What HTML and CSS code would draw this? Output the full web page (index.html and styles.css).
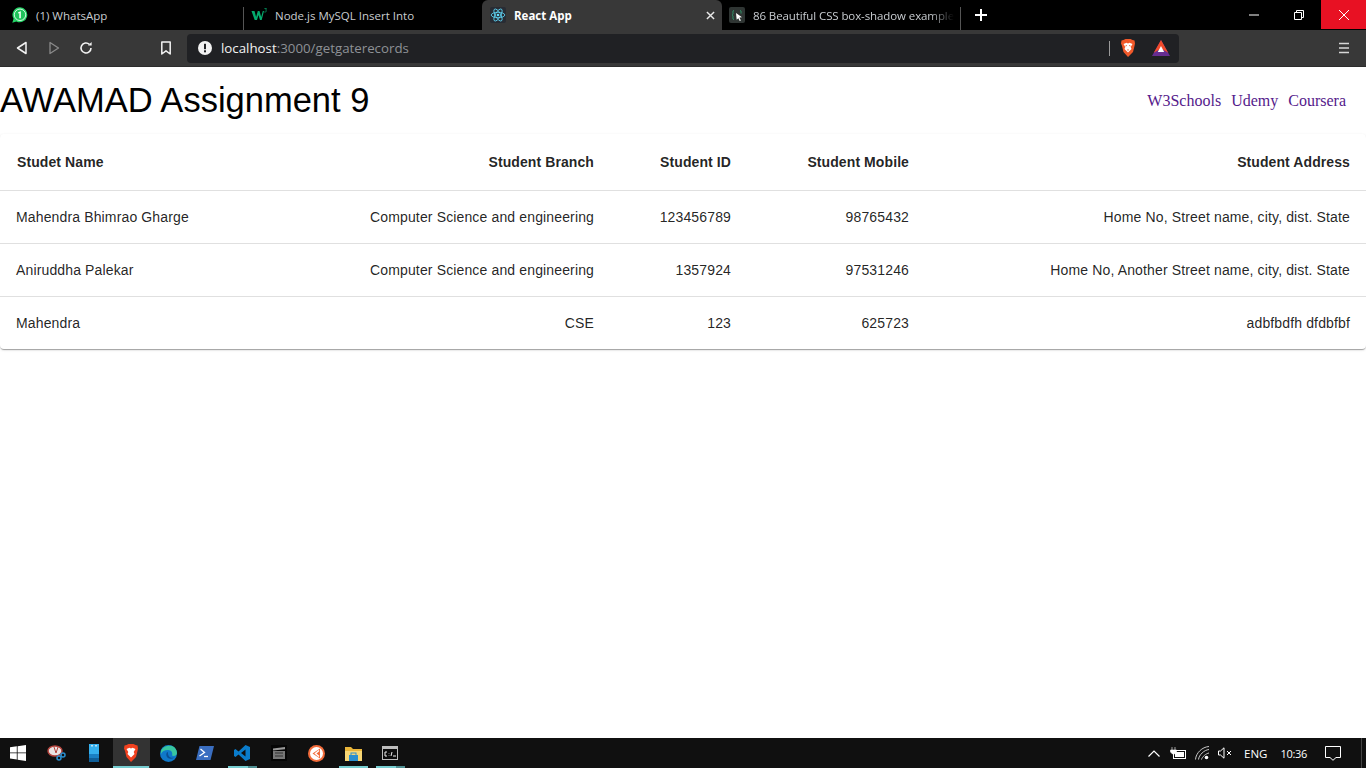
FILE: index.html
```html
<!DOCTYPE html>
<html lang="en">

<head>
    <meta charset="UTF-8">
    <meta name="viewport" content="width=device-width, initial-scale=1.0">
    <title>React App</title>
    <link rel="stylesheet" href="styles.css">
</head>

<body>

    <!-- browser tabs -->
    <div class="tab-strip">
        <div class="tab tab-first">
            <svg class="favicon" viewBox="0 0 16 16"><path d="M8 0.300a7.500 7.500 0 0 0-6.400 11.400L0.300 15.700l4.100-1.200A7.500 7.500 0 1 0 8 0.300z" fill="#25d366"/><circle cx="8" cy="7.800" r="5.700" fill="#1fc25a" stroke="#fff" stroke-width="0.800"/><path d="M8.800 4.300v7H7.300V6.100L6 6.600V5.400l2.500-1.100z" fill="#fff"/></svg>
            <span class="tab-title">(1) WhatsApp</span>
        </div>
        <div class="tab tab-second">
            <svg class="favicon" viewBox="0 0 16 16"><path d="M0.500 4h3l1.600 6 1.700-6h1.700l1.700 6 1.600-6h1.200l-2.300 9H9l-1.500-5-1.500 5H3.700z" fill="#04aa6d"/><path d="M13.400 1.500h2v0.700l-0.800 0.800c0.500 0.100 0.800 0.500 0.800 1 0 0.600-0.500 1-1.100 1h-1" fill="none" stroke="#04aa6d" stroke-width="0.700"/></svg>
            <span class="tab-title">Node.js MySQL Insert Into</span>
        </div>
        <div class="tab tab-active">
            <svg class="favicon" viewBox="0 0 16 16"><rect width="16" height="16" rx="2" fill="#282c34"/><g fill="none" stroke="#61dafb" stroke-width="0.800"><ellipse cx="8" cy="8" rx="6.800" ry="2.700"/><ellipse cx="8" cy="8" rx="6.800" ry="2.700" transform="rotate(60 8 8)"/><ellipse cx="8" cy="8" rx="6.800" ry="2.700" transform="rotate(120 8 8)"/></g><circle cx="8" cy="8" r="1.300" fill="#61dafb"/></svg>
            <span class="tab-title">React App</span>
            <svg class="tab-close" viewBox="0 0 10 10"><path d="M1 1l8 8M9 1l-8 8" stroke="#e8e8e8" stroke-width="1.600"/></svg>
        </div>
        <div class="tab tab-fourth">
            <svg class="favicon" viewBox="0 0 16 16"><rect width="16" height="16" rx="2" fill="#2f3533"/><path d="M5 3.500c-1.500 0-1 2-1 3s-1 1.500-1 1.500 1 .5 1 1.500-.5 3 1 3M11 3.500c1.500 0 1 2 1 3" fill="none" stroke="#2f9e6e" stroke-width="1"/><path d="M7 6l6 4.200-2.600.4 1.500 2.800-1.200.6-1.400-2.800L7.700 12.800z" fill="#fff"/></svg>
            <span class="tab-title tab-title-fade">86 Beautiful CSS box-shadow example</span>
        </div>
        <svg class="new-tab" viewBox="0 0 12 12"><path d="M6 0v12M0 6h12" stroke="#fff" stroke-width="2"/></svg>
        <div class="window-buttons">
            <div class="win-btn">
                <svg width="10" height="10" viewBox="0 0 10 10"><path d="M0 5h10" stroke="#fff" stroke-width="1"/></svg>
            </div>
            <div class="win-btn">
                <svg width="10" height="10" viewBox="0 0 10 10"><path d="M0.500 2.500h7v7h-7zM2.500 2.500v-2h7v7h-2" fill="none" stroke="#fff" stroke-width="1"/></svg>
            </div>
            <div class="win-btn win-close">
                <svg width="10" height="10" viewBox="0 0 10 10"><path d="M0 0l10 10M10 0L0 10" stroke="#fff" stroke-width="1"/></svg>
            </div>
        </div>
    </div>

    <!-- address bar -->
    <div class="toolbar">
        <svg class="tool-icon tool-back" viewBox="0 0 14 14"><path d="M11 1.500v11L2.500 7z" fill="none" stroke="#f2f2f2" stroke-width="1.500" stroke-linejoin="round"/></svg>
        <svg class="tool-icon tool-forward" viewBox="0 0 14 14"><path d="M3 1.500v11L11.500 7z" fill="none" stroke="#8a8a8a" stroke-width="1.300" stroke-linejoin="round"/></svg>
        <svg class="tool-icon tool-reload" viewBox="0 0 14 14"><path d="M12 7a5 5 0 1 1-1.600-3.700" fill="none" stroke="#f2f2f2" stroke-width="1.600"/><path d="M9 4.500h3.600V0.900z" fill="#f2f2f2"/></svg>
        <svg class="tool-icon tool-bookmark" viewBox="0 0 14 14"><path d="M2.800 1h8.400v12L7 9.800 2.800 13z" fill="none" stroke="#f2f2f2" stroke-width="1.500" stroke-linejoin="round"/></svg>
        <div class="address-bar">
            <svg class="info-icon" viewBox="0 0 14 14"><circle cx="7" cy="7" r="7" fill="#f2f2f2"/><rect x="6" y="2.800" width="2" height="5.400" fill="#202124"/><rect x="6" y="9.300" width="2" height="2" fill="#202124"/></svg>
            <span class="url"><span class="url-host">localhost</span>:3000/getgaterecords</span>
            <span class="address-sep"></span>
            <svg class="brave-icon" viewBox="0 0 16 18"><path d="M3.500 1L5.500 0h5l2 1 2 .5.500 3-.5 2.500-1.500 6L8 18l-4.500-5-1.500-6L1 4.500l.5-3z" fill="#f1592a"/><path d="M3.500 5l3-1.200L8 4.500l1.500-.7 3 1.200-1.800 3 .8 2L8 13.500 4.500 10l.8-2z" fill="#fff"/><path d="M6.800 6.500l-1.300.5M9.200 6.500l1.300.5" stroke="#f1592a"/><path d="M7 10.500h2L8 12z" fill="#f1592a"/></svg>
            <svg class="bat-icon" viewBox="0 0 18 16"><path d="M9 0l9 16H0z" fill="#662d91"/><path d="M9 0L1.800 12.800 9 8.500l7.200 4.300z" fill="#f04a2a"/><path d="M9 6l-3.200 6h6.400z" fill="#fff"/></svg>
        </div>
        <svg class="menu-icon" viewBox="0 0 12 12"><path d="M1 1.500h10M1 6h10M1 10.500h10" stroke="#d6d6d6" stroke-width="1.700"/></svg>
    </div>

    <!-- the page itself -->
    <main class="page">
        <header class="page-header">
            <h1>AWAMAD Assignment 9</h1>
            <nav class="site-links">
                <a href="#">W3Schools</a>
                <a href="#">Udemy</a>
                <a href="#">Coursera</a>
            </nav>
        </header>

        <div class="table-card">
            <table class="records">
                <colgroup>
                    <col class="col-name">
                    <col class="col-branch">
                    <col class="col-id">
                    <col class="col-mobile">
                    <col class="col-address">
                </colgroup>
                <thead>
                    <tr>
                        <th>Studet Name</th>
                        <th class="num">Student Branch</th>
                        <th class="num">Student ID</th>
                        <th class="num">Student Mobile</th>
                        <th class="num">Student Address</th>
                    </tr>
                </thead>
                <tbody>
                    <tr>
                        <td>Mahendra Bhimrao Gharge</td>
                        <td class="num">Computer Science and engineering</td>
                        <td class="num">123456789</td>
                        <td class="num">98765432</td>
                        <td class="num">Home No, Street name, city, dist. State</td>
                    </tr>
                    <tr>
                        <td>Aniruddha Palekar</td>
                        <td class="num">Computer Science and engineering</td>
                        <td class="num">1357924</td>
                        <td class="num">97531246</td>
                        <td class="num">Home No, Another Street name, city, dist. State</td>
                    </tr>
                    <tr class="last-row">
                        <td>Mahendra</td>
                        <td class="num">CSE</td>
                        <td class="num">123</td>
                        <td class="num">625723</td>
                        <td class="num">adbfbdfh dfdbfbf</td>
                    </tr>
                </tbody>
            </table>
        </div>
    </main>

    <!-- windows taskbar -->
    <footer class="taskbar">
        <div class="task-start">
            <svg width="16" height="16" viewBox="0 0 16 16"><path d="M0 2.300l6.800-1v6.200H0zM7.600 1.200L16 0v7.500H7.600zM0 8.300h6.800v6.300L0 13.600zM7.600 8.300H16V16l-8.400-1.200z" fill="#fff"/></svg>
        </div>
        <div class="task-item">
            <svg width="20" height="20" viewBox="0 0 20 20"><ellipse cx="8" cy="8" rx="7" ry="5" fill="#e9e3e3" stroke="#b4433c" stroke-width="1.500"/><path d="M7 4l2 6M11 4l-2 6" stroke="#b4433c" stroke-width="1"/><circle cx="12" cy="15" r="2" fill="none" stroke="#2a8fd0" stroke-width="1.500"/><circle cx="16" cy="12" r="2" fill="none" stroke="#2a8fd0" stroke-width="1.500"/></svg>
        </div>
        <div class="task-item">
            <svg width="10" height="18" viewBox="0 0 10 18"><rect width="10" height="18" fill="#35b0ee"/><rect y="10" width="10" height="4" fill="#1a80c4"/><rect y="14" width="10" height="4" fill="#0f5f99"/><rect x="2" y="1" width="2" height="1.500" fill="#bfe3f5"/><rect x="6" y="1" width="2" height="1.500" fill="#bfe3f5"/></svg>
        </div>
        <div class="task-item task-open task-current">
            <svg width="16" height="18" viewBox="0 0 16 18"><path d="M3.500 1L5.500 0h5l2 1 2 .5.500 3-.5 2.500-1.500 6L8 18l-4.500-5-1.500-6L1 4.500l.5-3z" fill="#f1411f"/><path d="M3.500 5l3-1.200L8 4.500l1.500-.7 3 1.200-1.800 3 .8 2L8 13.500 4.500 10l.8-2z" fill="#fff"/></svg>
        </div>
        <div class="task-item">
            <svg width="17" height="17" viewBox="0 0 17 17"><circle cx="8.500" cy="8.500" r="8.500" fill="#0f78c9"/><path d="M1 6C2.500 1.500 8 0 12 1c3 1 5 4 5 7 0 2.500-3 3.500-5 2.500C13 8 11.500 5 8 5 4.500 5 2 6.500 1 9z" fill="#38c6a0"/><path d="M8 7c-2 .5-2.500 4 0 6 1.500 1 4 1 6.500-.5-3.500 1-7-.5-6.500-5.500z" fill="#0b4f94"/></svg>
        </div>
        <div class="task-item">
            <svg width="18" height="14" viewBox="0 0 18 14"><path d="M3.500 0H18l-3.500 14H0z" fill="#3a6ec0"/><path d="M4.500 3l4 3.500-5 3.500" fill="none" stroke="#fff" stroke-width="1.300"/><path d="M8 10.500h4" stroke="#fff" stroke-width="1.300"/></svg>
        </div>
        <div class="task-item task-open task-split">
            <svg width="16" height="16" viewBox="0 0 16 16"><path d="M11.500 0L16 2v12l-4.500 2L4.500 9.500 1.500 12 0 11V5l1.500-1 3 2.500z" fill="#0a7ccb"/><path d="M11.500 4.500v7L7 8z" fill="#101010"/></svg>
        </div>
        <div class="task-item">
            <svg width="16" height="16" viewBox="0 0 16 16"><rect width="16" height="16" fill="#050505"/><rect x="2" y="6" width="12" height="8" fill="#777"/><path d="M2 3.500l12-1.500v2.200L2 5.500z" fill="#999"/><path d="M4 8h8M4 11h8" stroke="#333"/></svg>
        </div>
        <div class="task-item">
            <svg width="17" height="17" viewBox="0 0 17 17"><circle cx="8.500" cy="8.500" r="8.500" fill="#f26b3a"/><circle cx="8.500" cy="8.500" r="6.500" fill="#fff"/><path d="M4.500 8.500L12 3.500v10z" fill="#f26b3a"/><path d="M11 5.500l-3.500 3 3.500 3" fill="none" stroke="#fff" stroke-width="1.500"/></svg>
        </div>
        <div class="task-item task-open">
            <svg width="17" height="15" viewBox="0 0 17 15"><path d="M0 1h6l2 2h9v12H0z" fill="#e9b53a"/><rect y="5" width="17" height="10" fill="#f8d775"/><rect x="4" y="9" width="9" height="6" fill="#2a8fd0"/><rect x="6" y="7" width="5" height="3" fill="none" stroke="#2a8fd0"/></svg>
        </div>
        <div class="task-item task-open task-split">
            <svg width="16" height="14" viewBox="0 0 16 14"><rect x="0.500" y="0.500" width="15" height="13" fill="#0c0c0c" stroke="#bdbdbd"/><rect x="1" y="1" width="14" height="2" fill="#bdbdbd"/><path d="M5 6H3v4h2M7 7v.5M7 9.500v.5M10 6l-1 4M11 10h3" fill="none" stroke="#eee"/></svg>
        </div>
        <div class="tray">
            <svg class="tray-chevron" width="12" height="7" viewBox="0 0 12 7"><path d="M0.500 6.500L6 1l5.500 5.500" fill="none" stroke="#fff" stroke-width="1.200"/></svg>
            <svg class="tray-battery" width="18" height="12" viewBox="0 0 18 12"><path d="M3 0v3M6 0v3M1.500 3h6v2L5.500 7h-2l-2-2z" fill="#fff" stroke="#fff" stroke-width="0.600"/><rect x="4.500" y="3.500" width="12" height="8" fill="none" stroke="#fff"/><rect x="6" y="5" width="9" height="5" fill="#fff"/></svg>
            <svg class="tray-wifi" width="15" height="14" viewBox="0 0 15 14"><g fill="none" stroke="#c8c8c8"><path d="M0.500 13.500C1 7 7 1 14 .500"/><path d="M3.500 13.500C4 9 9 4 14 3.500"/><path d="M6.500 13.500C7 11 11 7.500 14 7"/></g><circle cx="11.500" cy="11.500" r="1.800" fill="#fff"/></svg>
            <svg class="tray-sound" width="14" height="12" viewBox="0 0 14 12"><path d="M0.500 4h2L6 .800v10.400L2.500 8h-2z" fill="none" stroke="#fff"/><path d="M9 4l4 4M13 4l-4 4" stroke="#fff"/></svg>
            <span class="tray-lang">ENG</span>
            <span class="tray-time">10:36</span>
            <svg class="tray-notes" width="16" height="15" viewBox="0 0 16 15"><path d="M0.500 0.500h15v11h-4.500L8 14.300 5 11.500H.5z" fill="none" stroke="#fff"/></svg>
            <span class="tray-edge"></span>
        </div>
    </footer>

</body>

</html>
```

FILE: styles.css
```css
* {
    box-sizing: border-box;
}

html, body {
    height: 100%;
    margin: 0;
}

body {
    display: flex;
    flex-direction: column;
    height: 768px;
    overflow: hidden;
    background-color: #fff;
    font-family: 'Liberation Sans', Arial, sans-serif;
}

/* tab strip */
.tab-strip {
    display: flex;
    align-items: stretch;
    height: 30px;
    flex-shrink: 0;
    background-color: #000;
    color: #c8ccd0;
    font-family: 'Open Sans', 'Noto Sans', sans-serif;
    font-size: 11.5px;
}

.tab {
    display: flex;
    align-items: center;
    gap: 8px;
    padding-left: 8px;
    position: relative;
}

.tab-first {
    width: 243px;
    padding-left: 12px;
}

.tab-second {
    width: 239px;
}

.tab-active {
    width: 240px;
    background-color: #383838;
    border-radius: 6px 6px 0 0;
    color: #fff;
    font-weight: 700;
}

.tab-fourth {
    width: 239px;
    padding-left: 7px;
}

.tab-second::before,
.tab-fourth::after {
    content: '';
    position: absolute;
    top: 7px;
    height: 23px;
    width: 1px;
    background-color: #555;
}

.tab-second::before {
    left: 0;
}

.tab-fourth::after {
    right: 0;
}

.favicon {
    width: 16px;
    height: 16px;
    flex-shrink: 0;
}

.tab-title {
    white-space: nowrap;
}

.tab-title-fade {
    letter-spacing: -0.1px;
    -webkit-mask-image: linear-gradient(to right, #000 88%, transparent);
    mask-image: linear-gradient(to right, #000 88%, transparent);
}

.tab-close {
    width: 9px;
    height: 9px;
    margin-left: auto;
    margin-right: 7px;
}

.new-tab {
    width: 12px;
    height: 12px;
    margin: 9px 0 0 14px;
}

.window-buttons {
    display: flex;
    margin-left: auto;
    height: 29px;
}

.win-btn {
    display: flex;
    align-items: center;
    justify-content: center;
    width: 45px;
}

.win-close {
    background-color: #e81123;
}

/* toolbar */
.toolbar {
    display: flex;
    align-items: center;
    height: 37px;
    flex-shrink: 0;
    background-color: #383838;
    border-bottom: 1px solid #2c2c2c;
    padding-left: 15px;
}

.tool-icon {
    width: 14px;
    height: 14px;
    flex-shrink: 0;
}

.tool-forward {
    margin-left: 18px;
}

.tool-reload {
    margin-left: 18px;
}

.tool-bookmark {
    margin-left: 66px;
}

.address-bar {
    display: flex;
    align-items: center;
    width: 992px;
    height: 29px;
    margin-left: 14px;
    padding-left: 11px;
    background-color: #202124;
    border-radius: 4px;
    font-family: 'Open Sans', 'Noto Sans', sans-serif;
    font-size: 13.3px;
    color: #8e9196;
}

.info-icon {
    width: 14px;
    height: 14px;
    margin-right: 9px;
}

.url-host {
    color: #f2f2f2;
}

.address-sep {
    width: 1px;
    height: 15px;
    margin-left: auto;
    background-color: #9a9a9a;
}

.brave-icon {
    width: 16px;
    height: 18px;
    margin-left: 10px;
}

.bat-icon {
    width: 18px;
    height: 16px;
    margin: 0 9px 0 16px;
}

.menu-icon {
    width: 12px;
    height: 12px;
    margin-left: auto;
    margin-right: 16px;
}

/* page */
.page {
    flex: 1;
    min-height: 0;
}

.page-header {
    display: flex;
    align-items: center;
    justify-content: space-between;
    height: 67px;
    padding-right: 20px;
}

h1 {
    margin: 0;
    font-size: 34.5px;
    font-weight: normal;
    color: #000;
}

.site-links {
    display: flex;
    gap: 10px;
    font-family: 'Liberation Serif', 'Times New Roman', serif;
    font-size: 16px;
}

.site-links a {
    color: #551a8b;
    text-decoration: none;
}

.table-card {
    border-radius: 4px;
    background-color: #fff;
    box-shadow: 0 2px 1px -1px rgba(0, 0, 0, 0.2), 0 1px 1px 0 rgba(0, 0, 0, 0.14), 0 1px 3px 0 rgba(0, 0, 0, 0.12);
}

.records {
    width: 100%;
    table-layout: fixed;
    border-collapse: collapse;
    font-size: 14px;
    color: rgba(0, 0, 0, 0.87);
}

.col-name {
    width: 354px;
}

.col-branch {
    width: 256px;
}

.col-id {
    width: 137px;
}

.col-mobile {
    width: 178px;
}

.records th,
.records td {
    padding: 16px;
    border-bottom: 1px solid #e0e0e0;
    text-align: left;
    line-height: 20px;
    white-space: nowrap;
}

.records th {
    height: 56px;
    padding-top: 15px;
    padding-bottom: 15px;
    font-weight: bold;
    letter-spacing: 0.09px;
}

.records th:first-child {
    padding-left: 17px;
}

.records td {
    height: 53px;
    letter-spacing: 0.14px;
}

.records .num {
    text-align: right;
}

.last-row td {
    border-bottom: none;
}

/* taskbar */
.taskbar {
    display: flex;
    align-items: center;
    height: 30px;
    flex-shrink: 0;
    background-color: #101010;
    color: #fff;
    font-family: 'Open Sans', 'Noto Sans', sans-serif;
    font-size: 11.5px;
}

.task-start {
    display: flex;
    align-items: center;
    justify-content: center;
    width: 39px;
    height: 100%;
    padding-right: 3px;
}

.task-item {
    display: flex;
    align-items: center;
    justify-content: center;
    position: relative;
    width: 37px;
    height: 100%;
    padding-right: 1px;
}

.task-current {
    background-color: #333;
}

.task-open::after {
    content: '';
    position: absolute;
    left: 0;
    right: 1px;
    bottom: 0;
    height: 2px;
    background-color: #76cdd0;
}

.task-open:not(.task-current)::after {
    left: 4px;
    right: 4px;
}

.task-split::after {
    background: linear-gradient(to right, #76cdd0 68%, #4f8f92 68%);
}

.tray {
    display: flex;
    align-items: center;
    margin-left: auto;
    height: 100%;
}

.tray-battery {
    margin-left: 9px;
}

.tray-wifi {
    margin-left: 8px;
}

.tray-sound {
    margin-left: 8px;
}

.tray-lang {
    margin-left: 12px;
}

.tray-time {
    margin-left: 13px;
    font-size: 11px;
    letter-spacing: -0.3px;
}

.tray-notes {
    margin-left: 18px;
}

.tray-edge {
    width: 1px;
    height: 100%;
    margin-left: 20px;
    margin-right: 4px;
    background-color: #444;
}
```
